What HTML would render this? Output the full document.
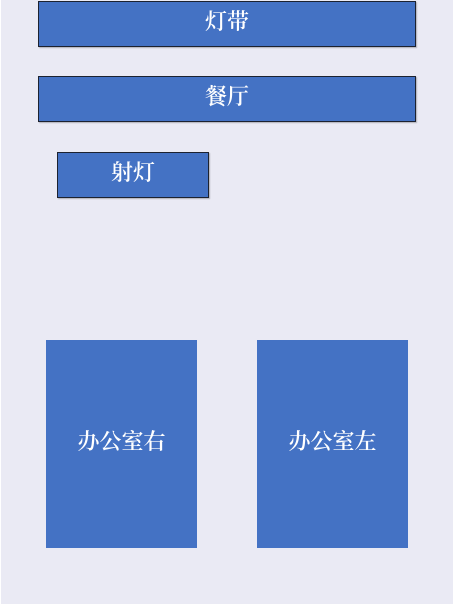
<!DOCTYPE html>
<html><head><meta charset="utf-8"><style>
html,body{margin:0;padding:0;width:454px;height:605px;overflow:hidden;background:#fff;}
#bg{position:absolute;left:1px;top:0;width:452px;height:604px;background:#eaeaf4;}
.b{position:absolute;background:#4472c4;color:#fff;display:flex;align-items:center;justify-content:center;
font-family:"Liberation Serif","Noto Serif CJK SC",serif;font-size:22px;font-weight:600;box-sizing:border-box;padding-bottom:7px;}
.k{border:1px solid #1c2230;box-shadow:1px 1px 1px rgba(0,0,0,0.25);}
</style></head><body>
<div id="bg"></div>
<div class="b k" style="left:38px;top:1px;width:378px;height:46px;">灯带</div>
<div class="b k" style="left:38px;top:76px;width:378px;height:46px;">餐厅</div>
<div class="b k" style="left:57px;top:152px;width:152px;height:46px;">射灯</div>
<div class="b" style="left:46px;top:340px;width:151px;height:208px;">办公室右</div>
<div class="b" style="left:257px;top:340px;width:151px;height:208px;">办公室左</div>
</body></html>
